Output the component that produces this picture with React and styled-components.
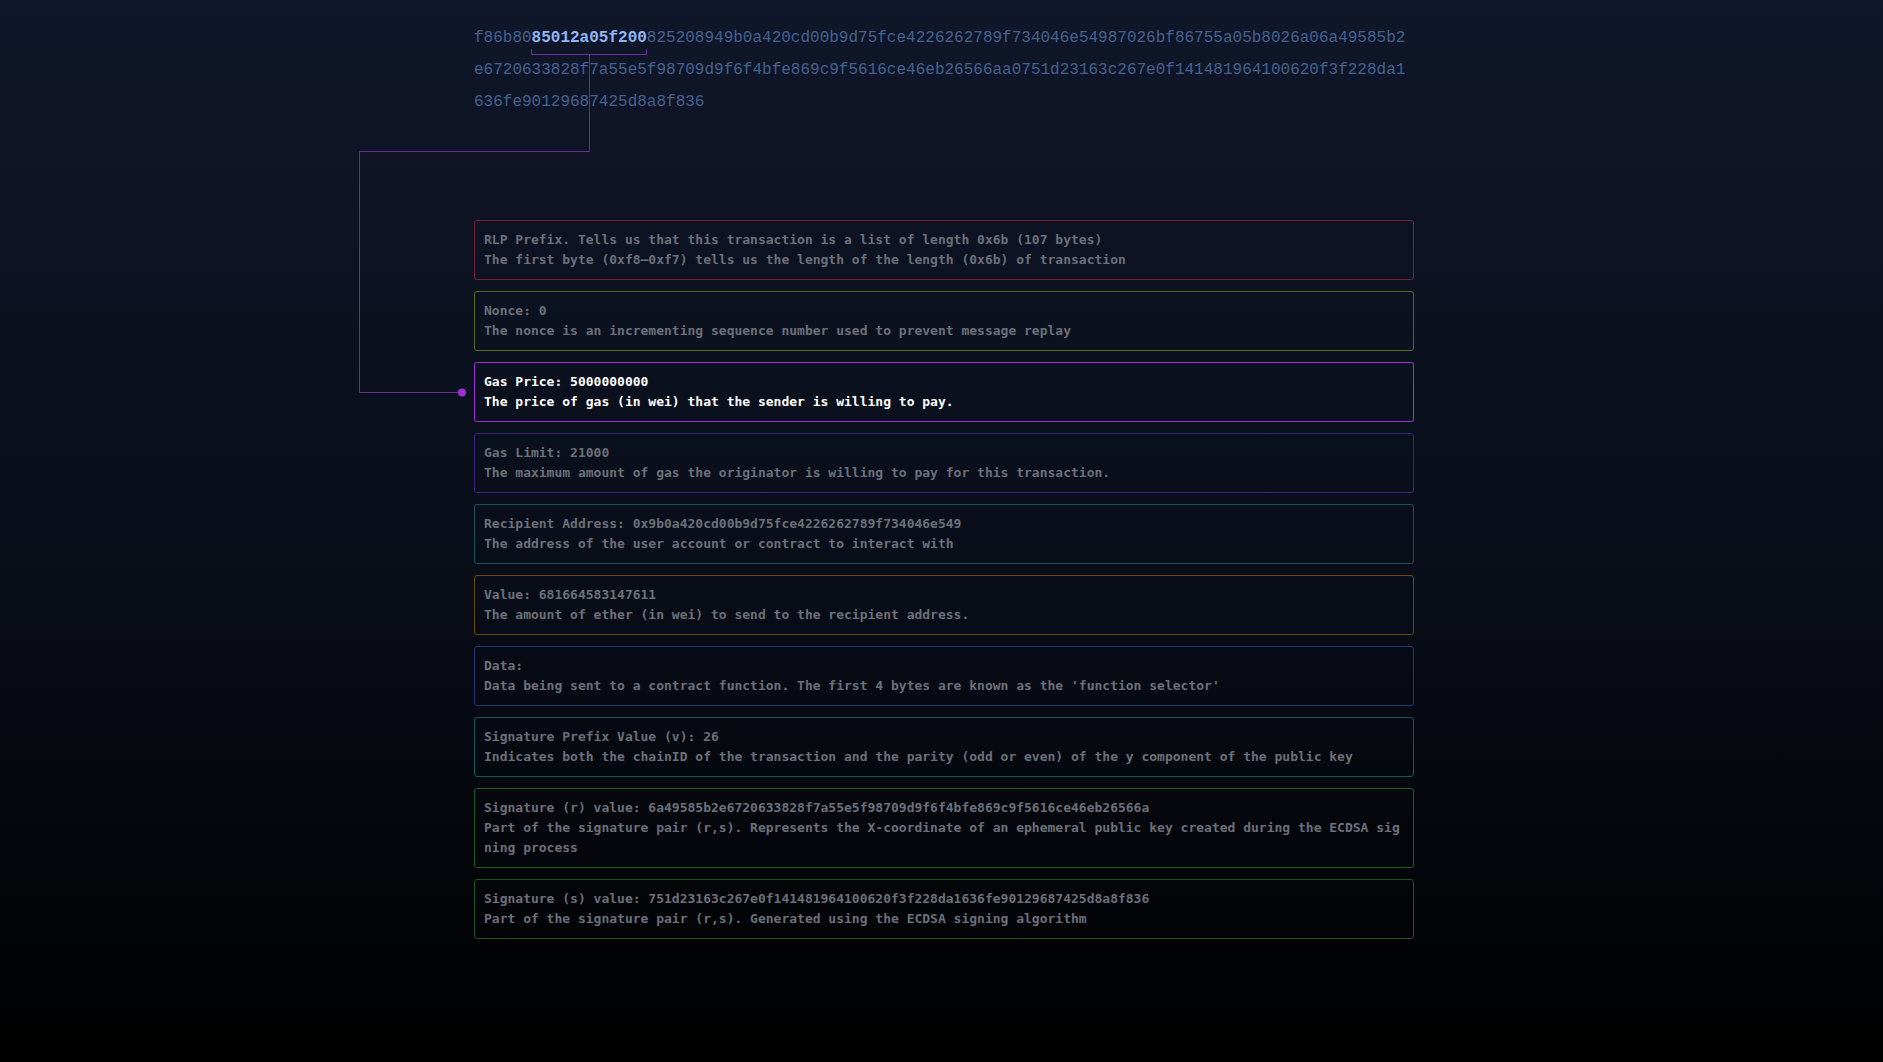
import React from "react";
import styled, { createGlobalStyle } from "styled-components";

const GlobalStyle = createGlobalStyle`
  html, body {
    margin: 0;
    padding: 0;
    min-height: 100%;
  }
  body {
    background: linear-gradient(to bottom, #10172a 0%, #090d18 55%, #000000 100%);
    min-height: 1062px;
  }
`;

const rawTx =
  "f86b8085012a05f200825208949b0a420cd00b9d75fce4226262789f734046e54987026bf86755a05b8026a06a49585b2e6720633828f7a55e5f98709d9f6f4bfe869c9f5616ce46eb26566aa0751d23163c267e0f141481964100620f3f228da1636fe90129687425d8a8f836";

const highlight = { start: 6, end: 18 };

const fields = [
  {
    title: "RLP Prefix. Tells us that this transaction is a list of length 0x6b (107 bytes)",
    desc: "The first byte (0xf8–0xf7) tells us the length of the length (0x6b) of transaction",
    border: "#74213a",
  },
  {
    title: "Nonce: 0",
    desc: "The nonce is an incrementing sequence number used to prevent message replay",
    border: "#556716",
  },
  {
    title: "Gas Price: 5000000000",
    desc: "The price of gas (in wei) that the sender is willing to pay.",
    border: "#a22fd6",
    active: true,
  },
  {
    title: "Gas Limit: 21000",
    desc: "The maximum amount of gas the originator is willing to pay for this transaction.",
    border: "#3a2480",
  },
  {
    title: "Recipient Address: 0x9b0a420cd00b9d75fce4226262789f734046e549",
    desc: "The address of the user account or contract to interact with",
    border: "#14535c",
  },
  {
    title: "Value: 681664583147611",
    desc: "The amount of ether (in wei) to send to the recipient address.",
    border: "#684710",
  },
  {
    title: "Data:",
    desc: "Data being sent to a contract function. The first 4 bytes are known as the 'function selector'",
    border: "#1f3470",
  },
  {
    title: "Signature Prefix Value (v): 26",
    desc: "Indicates both the chainID of the transaction and the parity (odd or even) of the y component of the public key",
    border: "#115a55",
  },
  {
    title: "Signature (r) value: 6a49585b2e6720633828f7a55e5f98709d9f6f4bfe869c9f5616ce46eb26566a",
    desc: "Part of the signature pair (r,s). Represents the X-coordinate of an ephemeral public key created during the ECDSA signing process",
    border: "#175d22",
  },
  {
    title: "Signature (s) value: 751d23163c267e0f141481964100620f3f228da1636fe90129687425d8a8f836",
    desc: "Part of the signature pair (r,s). Generated using the ECDSA signing algorithm",
    border: "#1a5324",
  },
];

const App = () => {
  return (
    <Page>
      <GlobalStyle />
      <Column>
        <HexBlock>
          {rawTx.slice(0, highlight.start)}
          <HexMark>{rawTx.slice(highlight.start, highlight.end)}</HexMark>
          {rawTx.slice(highlight.end)}
        </HexBlock>

        {/* bracket under the selected bytes, wired to the active field */}
        <Connector width="300" height="400" viewBox="0 0 300 400">
          <g fill="none" stroke="#6d2a9c" strokeWidth="1">
            <path d="M173.5 27 V32.5 H288.5 V27" />
            <path d="M231.5 32.5 V129.5 H1.5 V370.5 H104" />
          </g>
          <circle cx="104" cy="370.5" r="4" fill="#9b2fd4" />
        </Connector>

        <FieldList>
          {fields.map((f) => (
            <FieldCard key={f.title} $border={f.border} $active={f.active}>
              <div>{f.title}</div>
              <div>{f.desc}</div>
            </FieldCard>
          ))}
        </FieldList>
      </Column>
    </Page>
  );
};

export default App;

const Page = styled.div`
  display: flex;
  justify-content: center;
  padding: 22px 0 60px;
  min-height: 1062px;
  box-sizing: border-box;
`;

const Column = styled.div`
  position: relative;
  width: 940px;
  margin-left: 5px;
`;

const HexBlock = styled.div`
  font-family: "Liberation Mono", "Courier New", monospace;
  font-size: 16px;
  line-height: 32px;
  color: #46618f;
  word-break: break-all;
`;

const HexMark = styled.span`
  color: #93b5f7;
  font-weight: 700;
`;

const Connector = styled.svg`
  position: absolute;
  left: -116px;
  top: 0;
  overflow: visible;
  pointer-events: none;
`;

const FieldList = styled.div`
  display: flex;
  flex-direction: column;
  gap: 11px;
  margin-top: 102px;
`;

const FieldCard = styled.div`
  border: 1px solid ${(p) => p.$border};
  border-radius: 3px;
  padding: 9px;
  font-family: "DejaVu Sans Mono", Menlo, monospace;
  font-weight: 700;
  font-size: 13px;
  line-height: 20px;
  color: ${(p) => (p.$active ? "#ffffff" : "#6c7079")};
  word-break: break-all;
`;
